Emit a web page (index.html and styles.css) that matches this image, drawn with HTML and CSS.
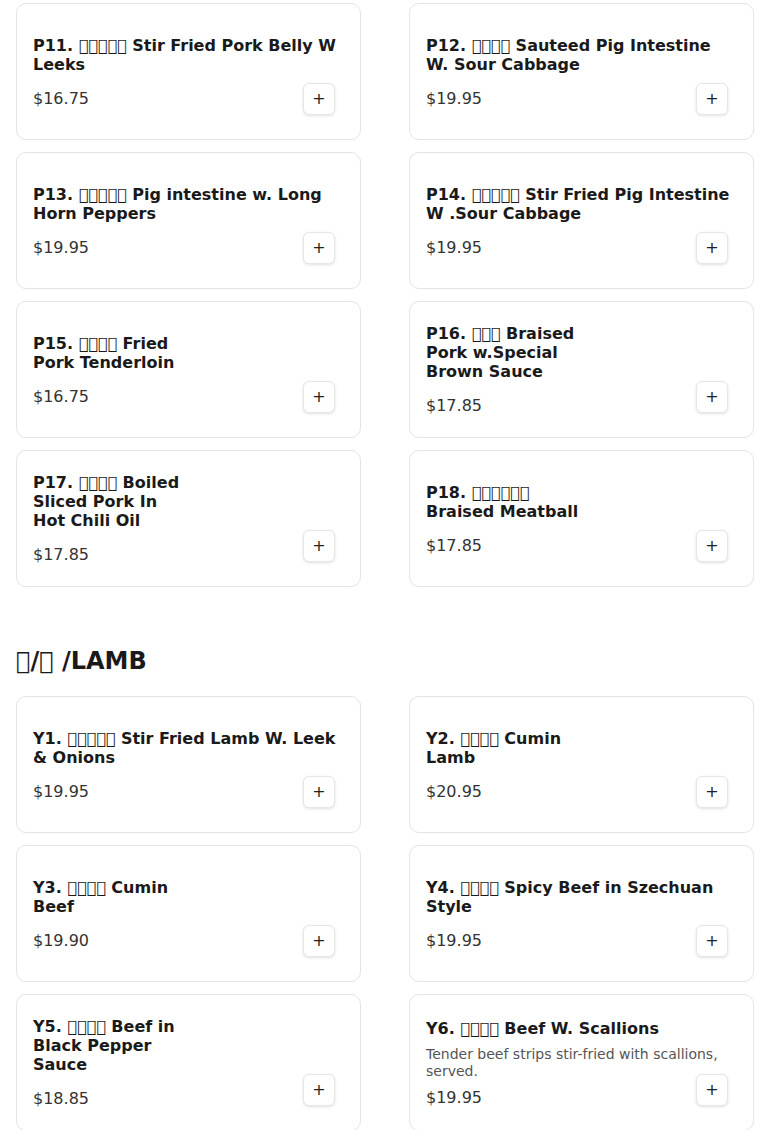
FILE: index.html
```html
<!DOCTYPE html>
<html lang="zh">
<head>
<meta charset="utf-8">
<title>Menu</title>
<link rel="stylesheet" href="styles.css">
</head>
<body>
<div class="page">
  <section class="section">
    <div class="grid">
      <div class="card">
        <div class="info">
          <div class="name">P11. &#xE000;&#xE000;&#xE000;&#xE000;&#xE000; Stir Fried Pork Belly W Leeks</div>
          <div class="price">$16.75</div>
        </div>
        <button class="add" type="button">+</button>
      </div>
      <div class="card">
        <div class="info">
          <div class="name">P12. &#xE000;&#xE000;&#xE000;&#xE000; Sauteed Pig Intestine W. Sour Cabbage</div>
          <div class="price">$19.95</div>
        </div>
        <button class="add" type="button">+</button>
      </div>
      <div class="card">
        <div class="info">
          <div class="name">P13. &#xE000;&#xE000;&#xE000;&#xE000;&#xE000; Pig intestine w. Long Horn Peppers</div>
          <div class="price">$19.95</div>
        </div>
        <button class="add" type="button">+</button>
      </div>
      <div class="card">
        <div class="info">
          <div class="name">P14. &#xE000;&#xE000;&#xE000;&#xE000;&#xE000; Stir Fried Pig Intestine W .Sour Cabbage</div>
          <div class="price">$19.95</div>
        </div>
        <button class="add" type="button">+</button>
      </div>
      <div class="card">
        <div class="info">
          <div class="name narrow">P15. &#xE000;&#xE000;&#xE000;&#xE000; Fried Pork Tenderloin</div>
          <div class="price">$16.75</div>
        </div>
        <button class="add" type="button">+</button>
      </div>
      <div class="card">
        <div class="info">
          <div class="name narrow">P16. &#xE000;&#xE000;&#xE000; Braised Pork w.Special Brown Sauce</div>
          <div class="price">$17.85</div>
        </div>
        <button class="add" type="button">+</button>
      </div>
      <div class="card">
        <div class="info">
          <div class="name narrow">P17. &#xE000;&#xE000;&#xE000;&#xE000; Boiled Sliced Pork In Hot Chili Oil</div>
          <div class="price">$17.85</div>
        </div>
        <button class="add" type="button">+</button>
      </div>
      <div class="card">
        <div class="info">
          <div class="name narrow">P18. &#xE000;&#xE000;&#xE000;&#xE000;&#xE000;&#xE000; Braised Meatball</div>
          <div class="price">$17.85</div>
        </div>
        <button class="add" type="button">+</button>
      </div>
    </div>
  </section>

  <section class="section">
    <h2 class="section-title">&#xE000;/&#xE000; /LAMB</h2>
    <div class="grid">
      <div class="card">
        <div class="info">
          <div class="name">Y1. &#xE000;&#xE000;&#xE000;&#xE000;&#xE000; Stir Fried Lamb W. Leek &amp; Onions</div>
          <div class="price">$19.95</div>
        </div>
        <button class="add" type="button">+</button>
      </div>
      <div class="card">
        <div class="info">
          <div class="name narrow">Y2. &#xE000;&#xE000;&#xE000;&#xE000; Cumin Lamb</div>
          <div class="price">$20.95</div>
        </div>
        <button class="add" type="button">+</button>
      </div>
      <div class="card">
        <div class="info">
          <div class="name narrow">Y3. &#xE000;&#xE000;&#xE000;&#xE000; Cumin Beef</div>
          <div class="price">$19.90</div>
        </div>
        <button class="add" type="button">+</button>
      </div>
      <div class="card">
        <div class="info">
          <div class="name">Y4. &#xE000;&#xE000;&#xE000;&#xE000; Spicy Beef in Szechuan Style</div>
          <div class="price">$19.95</div>
        </div>
        <button class="add" type="button">+</button>
      </div>
      <div class="card">
        <div class="info">
          <div class="name narrow">Y5. &#xE000;&#xE000;&#xE000;&#xE000; Beef in Black Pepper Sauce</div>
          <div class="price">$18.85</div>
        </div>
        <button class="add" type="button">+</button>
      </div>
      <div class="card">
        <div class="info">
          <div class="name">Y6. &#xE000;&#xE000;&#xE000;&#xE000; Beef W. Scallions</div>
          <div class="desc">Tender beef strips stir-fried with scallions, served.</div>
          <div class="price">$19.95</div>
        </div>
        <button class="add" type="button">+</button>
      </div>
    </div>
  </section>
</div>
</body>
</html>
```

FILE: styles.css
```css
* {
  box-sizing: border-box;
}

html, body {
  margin: 0;
  padding: 0;
  background: #ffffff;
}

body {
  font-family: "DejaVu Sans", sans-serif;
  color: #1a1a1a;
}

.page {
  padding: 3px 16px 0;
}

.section + .section {
  margin-top: 60px;
}

.section-title {
  margin: 0 0 20px;
  font-size: 24px;
  line-height: 29px;
  font-weight: 700;
  color: #1a1a1a;
}

.grid {
  display: grid;
  grid-template-columns: 345px 345px;
  column-gap: 48px;
  row-gap: 12px;
}

.card {
  display: grid;
  grid-template-columns: 1fr;
  grid-template-rows: 1fr;
  min-height: 137px;
  padding: 16px;
  border: 1px solid #e4e4e4;
  border-radius: 10px;
  background: #ffffff;
}

.info {
  grid-area: 1 / 1;
  align-self: center;
  display: flex;
  flex-direction: column;
  min-width: 0;
}

.name {
  font-size: 16px;
  line-height: 19px;
  font-weight: 700;
  color: #1a1a1a;
}

.name.narrow {
  max-width: 157px;
}

.desc {
  margin-top: 8px;
  font-size: 14px;
  line-height: 17px;
  color: #555555;
}

.price {
  margin-top: 15px;
  font-size: 16px;
  line-height: 19px;
  color: #333333;
}

.desc + .price {
  margin-top: 8px;
}

.add {
  grid-area: 1 / 1;
  justify-self: end;
  align-self: end;
  width: 32px;
  height: 32px;
  margin: 0 9px 8px 0;
  padding: 0;
  border: 1px solid #e6e6e6;
  border-radius: 6px;
  background: #ffffff;
  box-shadow: 0 1px 3px rgba(0, 0, 0, 0.12);
  font-family: "DejaVu Sans", sans-serif;
  font-size: 16px;
  line-height: 30px;
  color: #222222;
  cursor: pointer;
}
```
